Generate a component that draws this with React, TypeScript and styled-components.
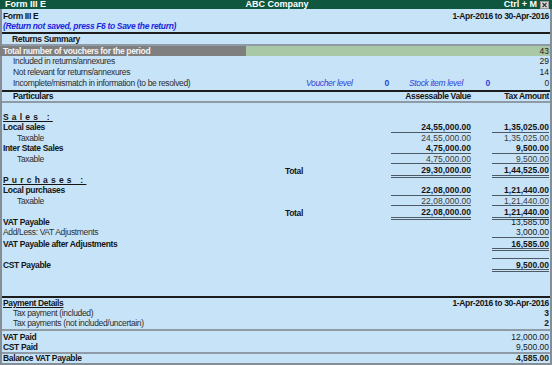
import React from 'react';
import styled, { createGlobalStyle, css } from 'styled-components';

type Rule = 'single' | 'double';

interface Entry {
    label?: string;
    kind: 'blank' | 'head' | 'group' | 'item' | 'plain' | 'total';
    value?: string;
    tax?: string;
    strong?: boolean;
    valueRule?: Rule;
    taxRule?: Rule;
}

const entries: Entry[] = [
    { kind: 'blank' },
    { kind: 'head', label: 'Sales :' },
    { kind: 'group', label: 'Local sales', value: '24,55,000.00', tax: '1,35,025.00', strong: true, valueRule: 'single', taxRule: 'single' },
    { kind: 'item', label: 'Taxable', value: '24,55,000.00', tax: '1,35,025.00' },
    { kind: 'group', label: 'Inter State Sales', value: '4,75,000.00', tax: '9,500.00', strong: true, valueRule: 'single', taxRule: 'single' },
    { kind: 'item', label: 'Taxable', value: '4,75,000.00', tax: '9,500.00', valueRule: 'single', taxRule: 'single' },
    { kind: 'total', label: 'Total', value: '29,30,000.00', tax: '1,44,525.00', strong: true, valueRule: 'double', taxRule: 'double' },
    { kind: 'head', label: 'Purchases :' },
    { kind: 'group', label: 'Local purchases', value: '22,08,000.00', tax: '1,21,440.00', strong: true, valueRule: 'single', taxRule: 'single' },
    { kind: 'item', label: 'Taxable', value: '22,08,000.00', tax: '1,21,440.00', valueRule: 'single', taxRule: 'single' },
    { kind: 'total', label: 'Total', value: '22,08,000.00', tax: '1,21,440.00', strong: true, valueRule: 'double', taxRule: 'double' },
    { kind: 'group', label: 'VAT Payable', tax: '13,585.00' },
    { kind: 'plain', label: 'Add/Less: VAT Adjustments', tax: '3,000.00', taxRule: 'single' },
    { kind: 'group', label: 'VAT Payable after Adjustments', tax: '16,585.00', strong: true, taxRule: 'double' },
    { kind: 'blank', taxRule: 'single' },
    { kind: 'group', label: 'CST Payable', tax: '9,500.00', strong: true, taxRule: 'double' },
];

const CloseIcon = () => (
    <svg width="9" height="8" viewBox="0 0 9 8">
        <rect x="0.5" y="0.5" width="8" height="7" fill="#d8d8d8" stroke="#9a9a9a" />
        <path d="M2.5 2 L6.5 6 M6.5 2 L2.5 6" stroke="#333" strokeWidth="1.1" />
    </svg>
);

const App: React.FC = () => {
    return (
        <>
            <GlobalStyle />
            <Screen>
                <TitleBar>
                    <span>Form III E</span>
                    <TitleCenter>ABC Company</TitleCenter>
                    <TitleRight>Ctrl + M <CloseIcon /></TitleRight>
                </TitleBar>
                <Body>
                    <Header>
                        <HeadRow>
                            <Strong>Form III E</Strong>
                            <Strong>1-Apr-2016 to 30-Apr-2016</Strong>
                        </HeadRow>
                        <Notice>(Return not saved, press F6 to Save the return)</Notice>
                    </Header>
                    <Divider $tone="dark" />
                    <SectionTitle>Returns Summary</SectionTitle>
                    <Divider $tone="gray" />
                    <HighlightRow>
                        <HighlightLabel>Total number of vouchers for the period</HighlightLabel>
                        <HighlightValue>43</HighlightValue>
                    </HighlightRow>
                    <SummaryRow>
                        <span>Included in returns/annexures</span>
                        <Figure>29</Figure>
                    </SummaryRow>
                    <SummaryRow>
                        <span>Not relevant for returns/annexures</span>
                        <Figure>14</Figure>
                    </SummaryRow>
                    <LevelRow>
                        <span>Incomplete/mismatch in information (to be resolved)</span>
                        <LevelLabel>Voucher level</LevelLabel>
                        <LevelCount>0</LevelCount>
                        <span />
                        <LevelLabel>Stock item level</LevelLabel>
                        <LevelCount>0</LevelCount>
                        <LevelTotal>0</LevelTotal>
                    </LevelRow>
                    <Divider $tone="dark" />
                    <ColumnHead>
                        <ColumnTitle $indent={11}>Particulars</ColumnTitle>
                        <span />
                        <ColumnTitle $right>Assessable Value</ColumnTitle>
                        <span />
                        <ColumnTitle $right>Tax Amount</ColumnTitle>
                    </ColumnHead>
                    <Divider $tone="gray" />

                    <Particulars>
                        {entries.map((e, i) => (
                            <LedgerRow key={i} $first={i === 0}>
                                {e.kind === 'total' ? <span /> : (
                                    <Label $kind={e.kind}>{e.label}</Label>
                                )}
                                {e.kind === 'total' ? <Label $kind="total">{e.label}</Label> : <span />}
                                <Amount $strong={e.strong} $muted={e.kind === 'item'} $rule={e.value ? e.valueRule : undefined}>{e.value}</Amount>
                                <span />
                                <Amount $strong={e.strong} $muted={e.kind === 'item'} $rule={e.taxRule}>{e.tax}</Amount>
                            </LedgerRow>
                        ))}
                    </Particulars>

                    <Divider $tone="dark" />
                    <Block $bottom={1}>
                        <FooterRow>
                            <PaymentTitle>Payment Details</PaymentTitle>
                            <Strong>1-Apr-2016 to 30-Apr-2016</Strong>
                        </FooterRow>
                        <FooterRow $indent={11}>
                            <span>Tax payment (included)</span>
                            <Figure $strong>3</Figure>
                        </FooterRow>
                        <FooterRow $indent={11}>
                            <span>Tax payments (not included/uncertain)</span>
                            <Figure $strong>2</Figure>
                        </FooterRow>
                    </Block>
                    <Divider $tone="gray" />
                    <Block $top={1}>
                        <FooterRow>
                            <Strong>VAT Paid</Strong>
                            <Figure>12,000.00</Figure>
                        </FooterRow>
                        <FooterRow>
                            <Strong>CST Paid</Strong>
                            <Figure>9,500.00</Figure>
                        </FooterRow>
                    </Block>
                    <Divider $tone="gray" />
                    <FooterRow $height={9}>
                        <Strong>Balance VAT Payable</Strong>
                        <Figure $strong>4,585.00</Figure>
                    </FooterRow>
                </Body>
            </Screen>
        </>
    );
};

// --- STYLED COMPONENTS ---
const GlobalStyle = createGlobalStyle`
    html, body { margin: 0; padding: 0; background: #c7e3f8; }
    body { font-family: "Liberation Sans", Arial, sans-serif; }
`;

const Screen = styled.div`
    width: 552px; height: 365px; display: flex; flex-direction: column; overflow: hidden;
    background: #c7e3f8; color: #1d1d1d; font-size: 8.5px; line-height: 1; letter-spacing: -0.35px;
`;

const TitleBar = styled.div`
    height: 9px; flex-shrink: 0; background: #0f573f; color: #fff; font-weight: 700; font-size: 9px; letter-spacing: 0;
    display: grid; grid-template-columns: 1fr auto 1fr; align-items: center; padding: 0 3px 0 5px;
`;
const TitleCenter = styled.span`text-align: center;`;
const TitleRight = styled.span`
    display: flex; justify-content: flex-end; align-items: center; gap: 3px;
    svg { display: block; }
`;

const Body = styled.div`
    flex: 1; display: flex; flex-direction: column; min-height: 0;
    border-left: 2px solid #858d95; border-right: 2px solid #858d95; border-bottom: 2px solid #858d95;
`;

const Header = styled.div`height: 23px; padding: 2px 1px 0 1px; box-sizing: border-box;`;
const HeadRow = styled.div`height: 11px; display: flex; justify-content: space-between; align-items: center;`;
const Strong = styled.span`font-weight: 700; color: #151515;`;
const Figure = styled.span<{ $strong?: boolean }>`
    letter-spacing: 0; font-weight: ${({ $strong }) => ($strong ? 700 : 400)}; color: #1a1a1a;
`;
const Notice = styled.div`
    height: 9px; display: flex; align-items: center;
    color: #1d23e0; font-style: italic; font-weight: 700;
`;

const Divider = styled.div<{ $tone: 'dark' | 'gray' }>`
    flex-shrink: 0; height: 2px;
    background: ${({ $tone }) => ($tone === 'dark' ? '#1c1c1c' : '#8e9ba7')};
`;

const SectionTitle = styled.div`
    height: 10px; display: flex; align-items: center; padding-left: 10px; font-weight: 700; color: #151515;
`;

const HighlightRow = styled.div`
    height: 10px; display: grid; grid-template-columns: 246px 1fr; margin-left: -2px;
`;
const HighlightLabel = styled.div`
    background: #7f7f7f; color: #f4f4f4; font-weight: 700; display: flex; align-items: center; padding-left: 3px;
`;
const HighlightValue = styled.div`
    background: #a9c9a6; color: #1d1d1d; letter-spacing: 0;
    display: flex; align-items: center; justify-content: flex-end; padding-right: 1px;
`;

const SummaryRow = styled.div`
    height: 11px; display: flex; justify-content: space-between; align-items: center;
    padding: 0 1px 0 11px; color: #2c2c2c;
`;

const LevelRow = styled.div`
    height: 12px; display: grid; grid-template-columns: 293px 64px 19px 20px 66px 15px 1fr;
    align-items: center; padding: 0 1px 1px 11px; color: #2c2c2c; box-sizing: border-box;
`;
const LevelLabel = styled.span`color: #2d44d6; font-style: italic;`;
const LevelCount = styled.span`color: #2d44d6; font-weight: 700; text-align: right;`;
const LevelTotal = styled.span`text-align: right;`;

const ColumnHead = styled.div`
    height: 9px; display: grid; grid-template-columns: 283px 106px 80px 21px 57px; align-items: center;
    padding-right: 1px; font-weight: 700; color: #151515;
`;
const ColumnTitle = styled.span<{ $indent?: number; $right?: boolean }>`
    padding-left: ${({ $indent }) => $indent ?? 0}px;
    text-align: ${({ $right }) => ($right ? 'right' : 'left')};
`;

const Particulars = styled.div`flex: 1; min-height: 0;`;

const LedgerRow = styled.div<{ $first?: boolean }>`
    height: ${({ $first }) => ($first ? 8.5 : 10.5)}px;
    display: grid; grid-template-columns: 283px 106px 80px 21px 57px; padding-right: 1px;
`;

const Label = styled.span<{ $kind: Entry['kind'] }>`
    display: flex; align-items: center; white-space: nowrap;
    ${({ $kind }) => {
        switch ($kind) {
            case 'head': return css`
                padding-left: 1px; font-weight: 700; letter-spacing: 3.2px; color: #151515;
                text-decoration: underline; text-underline-offset: 1px;`;
            case 'group': return css`padding-left: 1px; font-weight: 700; color: #151515;`;
            case 'item': return css`padding-left: 15px; color: #2e2e2e;`;
            case 'plain': return css`padding-left: 1px; color: #2e2e2e;`;
            case 'total': return css`font-weight: 700; color: #151515;`;
            default: return '';
        }
    }}
`;

const Amount = styled.span<{ $strong?: boolean; $muted?: boolean; $rule?: Rule }>`
    display: flex; align-items: center; justify-content: flex-end; box-sizing: border-box; letter-spacing: 0;
    font-weight: ${({ $strong }) => ($strong ? 700 : 400)};
    color: ${({ $muted }) => ($muted ? '#3a3a3a' : '#151515')};
    ${({ $rule }) => $rule === 'single' && css`border-bottom: 1px solid #4d5a66;`}
    ${({ $rule }) => $rule === 'double' && css`border-bottom: 3px double #4d5a66;`}
    padding-top: ${({ $rule }) => ($rule === 'double' ? 2 : $rule === 'single' ? 1 : 0)}px;
`;

const Block = styled.div<{ $top?: number; $bottom?: number }>`
    padding-top: ${({ $top }) => $top ?? 0}px; padding-bottom: ${({ $bottom }) => $bottom ?? 0}px;
`;

const FooterRow = styled.div<{ $indent?: number; $height?: number }>`
    height: ${({ $height }) => $height ?? 10}px; display: flex; justify-content: space-between; align-items: center;
    padding: 0 1px 0 ${({ $indent }) => $indent ?? 1}px; color: #2c2c2c;
`;
const PaymentTitle = styled.span`font-weight: 700; color: #151515; text-decoration: underline; text-underline-offset: 1px;`;

export default App;
